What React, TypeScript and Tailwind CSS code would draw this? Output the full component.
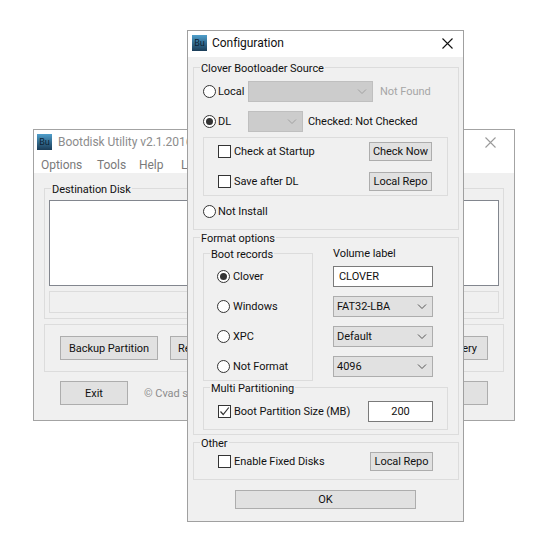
import React from 'react';

const FONT = "font-['Roboto','Liberation_Sans',sans-serif]";

function AppIcon() {
  return (
    <div className="w-[15px] h-[16px] shrink-0 flex items-center justify-center bg-gradient-to-b from-[#4f9fcc] to-[#1b3d58] text-[9px] leading-none text-[#0c2233]">
      Bu
    </div>
  );
}

function CloseX({ color }: { color: string }) {
  return (
    <svg width="11" height="11" viewBox="0 0 11 11" fill="none" stroke={color} strokeWidth="1.1">
      <path d="M0.5 0.5 L10.5 10.5 M10.5 0.5 L0.5 10.5" />
    </svg>
  );
}

function Chevron({ color = '#555' }: { color?: string }) {
  return (
    <svg width="10" height="6" viewBox="0 0 10 6" fill="none" stroke={color} strokeWidth="1">
      <path d="M1 0.5 L5 4.5 L9 0.5" />
    </svg>
  );
}

function Radio({ checked = false }: { checked?: boolean }) {
  return (
    <span className="w-[13px] h-[13px] shrink-0 rounded-full border border-[#333] bg-white flex items-center justify-center">
      {checked && <span className="w-[7px] h-[7px] rounded-full bg-[#333]" />}
    </span>
  );
}

function Check({ checked = false }: { checked?: boolean }) {
  return (
    <span className="w-[13px] h-[13px] shrink-0 border border-[#333] bg-white flex items-center justify-center">
      {checked && (
        <svg width="11" height="11" viewBox="0 0 11 11" fill="none" stroke="#333" strokeWidth="1.2">
          <path d="M1.5 5.5 L4.2 8.5 L9.8 1.5" />
        </svg>
      )}
    </span>
  );
}

function Btn({ label, className }: { label: string; className: string }) {
  return (
    <div className={`flex items-center justify-center whitespace-nowrap bg-[#e1e1e1] border border-[#adadad] shrink-0 ${className}`}>
      {label}
    </div>
  );
}

function Select({ label }: { label: string }) {
  return (
    <div className="w-[100px] h-[21px] flex items-center justify-between pl-[3px] pr-[5px] bg-[#e1e1e1] border border-[#adadad]">
      <span>{label}</span>
      <Chevron />
    </div>
  );
}

function Disabled({ width }: { width: string }) {
  return (
    <div className={`h-[21px] flex items-center justify-end pr-[5px] bg-[#cccccc] border border-[#bfbfbf] shrink-0 ${width}`}>
      <Chevron color="#a0a0a0" />
    </div>
  );
}

function Legend({ label }: { label: string }) {
  return (
    <div className="-mt-[8px] ml-[6px] h-[16px] w-fit px-[1px] flex items-center bg-[#f0f0f0] leading-none whitespace-nowrap">
      {label}
    </div>
  );
}

function BackWindow() {
  return (
    <div className="absolute left-[33px] top-[129px] w-[482px] h-[292px] border border-[#a3a3a3] bg-[#f0f0f0]">
      <div className="bg-white h-[43px]">
        <div className="h-[24px] flex items-center pl-[3px] pr-[18px]">
          <AppIcon />
          <span className="ml-[6px] text-[12px] text-[#8c8c8c]">Bootdisk Utility v2.1.2016</span>
          <span className="ml-auto">
            <CloseX color="#9a9a9a" />
          </span>
        </div>
        <div className="h-[19px] pt-[3px] flex items-center pl-[7px] text-[12px] text-[#7a7a7a]">
          <span className="w-[56px]">Options</span>
          <span className="w-[42px]">Tools</span>
          <span className="w-[42px]">Help</span>
          <span>L</span>
        </div>
      </div>

      <div className="ml-[10px] mt-[15px] w-[460px] h-[131px] border border-[#dcdcdc]">
        <Legend label="Destination Disk" />
        <div className="ml-[4px] mt-[3px] w-[450px] h-[86px] bg-white border border-[#82868e]" />
        <div className="ml-[4px] mt-[5px] w-[450px] h-[22px] border border-[#dcdcdc]" />
      </div>

      <div className="ml-[10px] mt-[5px] w-[460px] h-[48px] border border-[#dcdcdc] flex gap-[12px] pt-[11px] pl-[15px] pr-[15px]">
        <Btn label="Backup Partition" className="w-[98px] h-[24px]" />
        <div className="w-[98px] h-[24px] pl-[7px] flex items-center bg-[#e1e1e1] border border-[#adadad]">Re</div>
        <div className="ml-auto w-[72px] h-[24px] pr-[10px] flex items-center justify-end bg-[#e1e1e1] border border-[#adadad]">Recovery</div>
      </div>

      <div className="ml-[26px] mr-[26px] mt-[9px] flex items-center">
        <Btn label="Exit" className="w-[68px] h-[24px]" />
        <span className="ml-[16px] text-[#8c8c8c]">© Cvad s</span>
        <div className="ml-auto w-[72px] h-[24px] bg-[#e1e1e1] border border-[#adadad]" />
      </div>
    </div>
  );
}

function ConfigWindow() {
  return (
    <div className="absolute left-[187px] top-[30px] w-[277px] h-[492px] border border-[#a0a0a0] bg-[#f0f0f0]">
      <div className="h-[26px] pb-[2px] bg-white flex items-center pl-[4px] pr-[10px]">
        <AppIcon />
        <span className="ml-[5px] text-[12px]">Configuration</span>
        <span className="ml-auto">
          <CloseX color="#111" />
        </span>
      </div>

      <div className="ml-[5px] mt-[10px] w-[266px] h-[163px] border border-[#dcdcdc]">
        <Legend label="Clover Bootloader Source" />
        <div className="mt-[5px] ml-[9px] h-[21px] flex items-center">
          <Radio />
          <span className="w-[32px] pl-[2px]">Local</span>
          <Disabled width="w-[125px]" />
          <span className="ml-[7px] text-[#a6a6a6]">Not Found</span>
        </div>
        <div className="mt-[9px] ml-[9px] h-[21px] flex items-center">
          <Radio checked />
          <span className="w-[32px] pl-[2px]">DL</span>
          <Disabled width="w-[55px]" />
          <span className="ml-[5px]">Checked: Not Checked</span>
        </div>
        <div className="mt-[5px] ml-[9px] w-[245px] h-[59px] border border-[#dcdcdc] pl-[14px] pr-[15px] pt-[4px]">
          <div className="h-[19px] flex items-center">
            <Check />
            <span className="ml-[3px]">Check at Startup</span>
            <Btn label="Check Now" className="ml-auto w-[63px] h-[19px]" />
          </div>
          <div className="mt-[11px] h-[19px] flex items-center">
            <Check />
            <span className="ml-[3px]">Save after DL</span>
            <Btn label="Local Repo" className="ml-auto w-[63px] h-[19px]" />
          </div>
        </div>
        <div className="mt-[5px] ml-[9px] h-[21px] flex items-center">
          <Radio />
          <span className="pl-[2px]">Not Install</span>
        </div>
      </div>

      <div className="ml-[5px] mt-[7px] w-[266px] h-[198px] border border-[#dcdcdc]">
        <Legend label="Format options" />
        <div className="mt-[7px] ml-[9px] flex gap-[20px]">
          <div className="w-[110px] h-[128px] border border-[#dcdcdc]">
            <Legend label="Boot records" />
            <div className="mt-[4px] pl-[13px] flex flex-col gap-[10px]">
              {['Clover', 'Windows', 'XPC', 'Not Format'].map((name, i) => (
                <div key={name} className="h-[20px] flex items-center">
                  <Radio checked={i === 0} />
                  <span className="ml-[3px]">{name}</span>
                </div>
              ))}
            </div>
          </div>
          <div className="w-[100px] flex flex-col">
            <div className="-mt-[7px] h-[14px] flex items-center leading-none">Volume label</div>
            <div className="mt-[6px] h-[21px] flex items-center pl-[5px] bg-white border border-[#7a7a7a]">CLOVER</div>
            <div className="mt-[9px] flex flex-col gap-[9px]">
              <Select label="FAT32-LBA" />
              <Select label="Default" />
              <Select label="4096" />
            </div>
          </div>
        </div>
        <div className="mt-[6px] ml-[9px] w-[245px] h-[43px] border border-[#dcdcdc]">
          <Legend label="Multi Partitioning" />
          <div className="mt-[5px] h-[21px] pl-[14px] pr-[14px] flex items-center">
            <Check checked />
            <span className="ml-[3px]">Boot Partition Size (MB)</span>
            <div className="ml-auto w-[65px] h-[21px] flex items-center justify-center bg-white border border-[#7a7a7a]">200</div>
          </div>
        </div>
      </div>

      <div className="ml-[5px] mt-[7px] w-[266px] h-[38px] border border-[#dcdcdc]">
        <Legend label="Other" />
        <div className="mt-[1px] h-[19px] pl-[24px] pr-[25px] flex items-center">
          <Check />
          <span className="ml-[3px]">Enable Fixed Disks</span>
          <Btn label="Local Repo" className="ml-auto w-[63px] h-[19px]" />
        </div>
      </div>

      <div className="mt-[10px] flex justify-center">
        <Btn label="OK" className="w-[181px] h-[19px]" />
      </div>
    </div>
  );
}

export default function App() {
  return (
    <div className={`relative w-[549px] h-[540px] overflow-hidden bg-white text-[11px] tracking-[-0.05px] leading-none text-[#111] ${FONT}`}>
      <BackWindow />
      <ConfigWindow />
    </div>
  );
}
